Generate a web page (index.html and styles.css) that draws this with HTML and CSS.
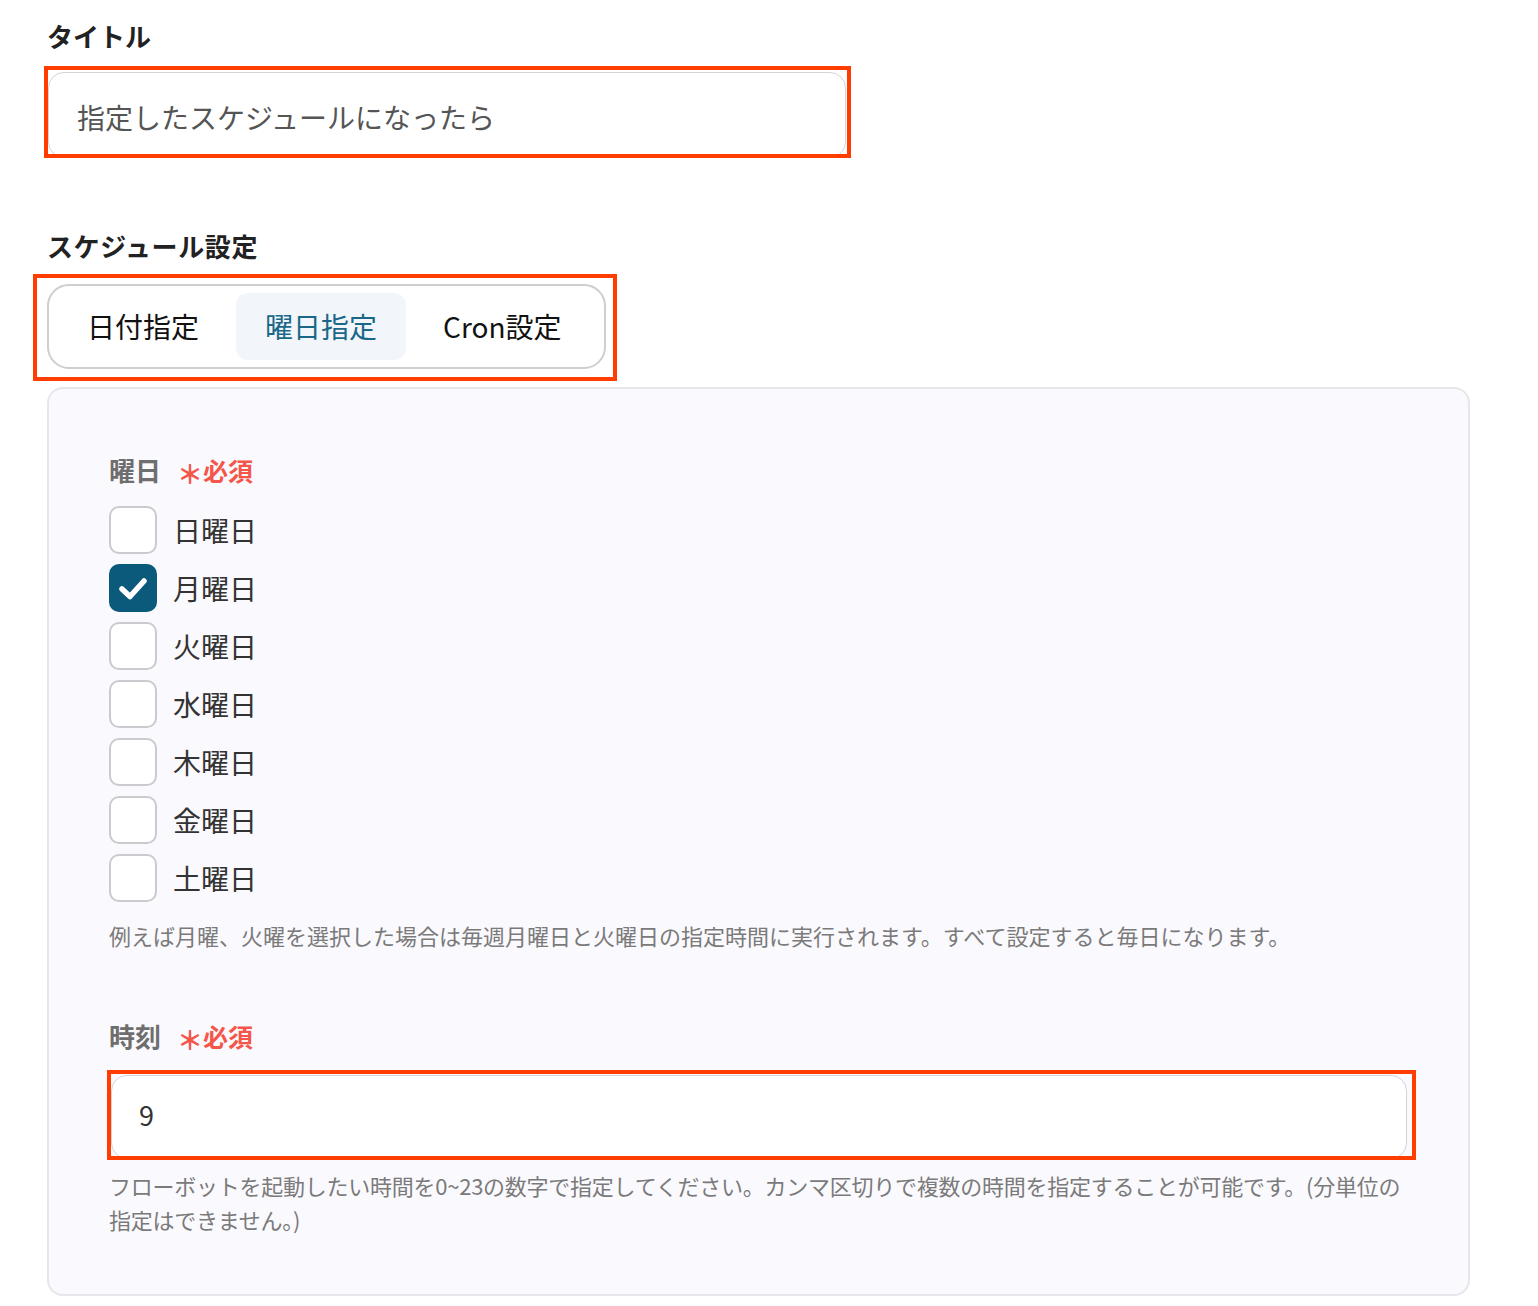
FILE: index.html
```html
<!DOCTYPE html>
<html lang="ja">
<head>
  <meta charset="UTF-8">
  <meta name="viewport" content="width=device-width, initial-scale=1.0">
  <title>スケジュール設定</title>
  <link rel="stylesheet" href="styles.css">
</head>
<body>
  <div class="page">
    <!-- タイトル -->
    <div class="section-label">タイトル</div>
    <div class="mark mark-title">
      <div class="text-input title-input">指定したスケジュールになったら</div>
    </div>

    <!-- スケジュール設定 -->
    <div class="section-label schedule-label">スケジュール設定</div>
    <div class="mark mark-tabs">
      <div class="tabs">
        <div class="tab">日付指定</div>
        <div class="tab active">曜日指定</div>
        <div class="tab">Cron設定</div>
      </div>
    </div>

    <div class="panel">
      <div class="field-label">曜日 <span class="req"><span class="star">＊</span>必須</span></div>
      <div class="checks">
        <div class="check-row"><span class="box"></span><span class="check-text">日曜日</span></div>
        <div class="check-row"><span class="box checked"><svg viewBox="0 0 48 48" width="48" height="48"><polyline points="13,25 21,32.5 35,17" fill="none" stroke="#fff" stroke-width="5.5" stroke-linecap="round" stroke-linejoin="round"/></svg></span><span class="check-text">月曜日</span></div>
        <div class="check-row"><span class="box"></span><span class="check-text">火曜日</span></div>
        <div class="check-row"><span class="box"></span><span class="check-text">水曜日</span></div>
        <div class="check-row"><span class="box"></span><span class="check-text">木曜日</span></div>
        <div class="check-row"><span class="box"></span><span class="check-text">金曜日</span></div>
        <div class="check-row"><span class="box"></span><span class="check-text">土曜日</span></div>
      </div>
      <p class="hint hint-days">例えば月曜、火曜を選択した場合は毎週月曜日と火曜日の指定時間に実行されます。すべて設定すると毎日になります。</p>

      <div class="field-label time-label">時刻 <span class="req"><span class="star">＊</span>必須</span></div>
      <div class="mark mark-time">
        <div class="text-input time-input">9</div>
      </div>
      <p class="hint hint-time">フローボットを起動したい時間を0~23の数字で指定してください。カンマ区切りで複数の時間を指定することが可能です。(分単位の指定はできません。)</p>
    </div>
  </div>
</body>
</html>
```

FILE: styles.css
```css
/* General */
body {
  margin: 0;
  padding: 0;
  background-color: #ffffff;
  font-family: "Noto Sans CJK JP", "Noto Sans", sans-serif;
  color: #222222;
}
.page {
  padding: 18px 0 0 47px;
  width: 1423px;
}
/* Etiquetas */
.section-label {
  font-size: 26px;
  font-weight: bold;
  line-height: 36px;
  color: #222222;
}
.schedule-label {
  margin-top: 70px;
  letter-spacing: 0.6px;
}
/* Marco rojo */
.mark {
  border: 4px solid #ff3d00;
  overflow: hidden;
  box-sizing: border-box;
}
.mark-title {
  margin: 12px 0 0 -3px;
  width: 807px;
  height: 92px;
}
.mark-tabs {
  margin: 10px 0 0 -14px;
  width: 584px;
  padding: 6px 7px 8px 10px;
}
.mark-time {
  margin: 16px -8px 0 -2px;
  height: 90px;
}
/* Campos */
.text-input {
  background-color: #ffffff;
  border: 1px solid #d3d3da;
  border-radius: 16px;
  box-sizing: border-box;
  color: #555555;
  font-size: 28px;
  display: flex;
  align-items: center;
}
.title-input {
  margin-top: 2px;
  height: 86px;
  padding: 4px 0 0 28px;
  margin-right: 1px;
}
.time-input {
  margin: 1px 5px 0 0;
  height: 84px;
  padding: 0 0 6px 27px;
  color: #333333;
  font-size: 27px;
}
/* Pestañas */
.tabs {
  display: flex;
  gap: 8px;
  border: 2px solid #cdcdd2;
  border-radius: 22px;
  padding: 7px 9px;
  background-color: #ffffff;
}
.tab {
  padding: 0 29px;
  line-height: 67px;
  font-size: 28px;
  color: #111111;
  border-radius: 12px;
}
.tab.active {
  background-color: #f2f6fb;
  color: #1a6888;
}
/* Panel */
.panel {
  margin-top: 6px;
  background-color: #faf9fd;
  border: 2px solid #e6e6eb;
  border-radius: 16px;
  padding: 63px 60px 58px 60px;
}
.field-label {
  font-size: 26px;
  line-height: 36px;
  font-weight: bold;
  color: #6e6e6e;
}
.time-label {
  margin-top: 66px;
}
.req {
  margin-left: 10px;
  color: #f4564a;
  font-size: 25px;
  font-weight: bold;
}
.star {
  font-size: 26px;
  position: relative;
  top: 3px;
}
/* Casillas */
.checks {
  margin-top: 18px;
  display: flex;
  flex-direction: column;
  gap: 10px;
}
.check-row {
  display: flex;
  align-items: center;
  gap: 16px;
  height: 48px;
}
.box {
  width: 48px;
  height: 48px;
  box-sizing: border-box;
  border: 2px solid #cbcbcf;
  border-radius: 10px;
  background-color: #ffffff;
  display: flex;
}
.box.checked {
  background-color: #0b5a7c;
  border-color: #0b5a7c;
}
.box svg {
  margin: -2px;
}
.check-text {
  font-size: 28px;
  color: #333333;
}
/* Textos de ayuda */
.hint {
  margin: 0;
  font-size: 22px;
  line-height: 34px;
  color: #7a7a7a;
}
.hint-days {
  margin-top: 16px;
}
.hint-time {
  margin-top: 8px;
  letter-spacing: -0.25px;
}
```
